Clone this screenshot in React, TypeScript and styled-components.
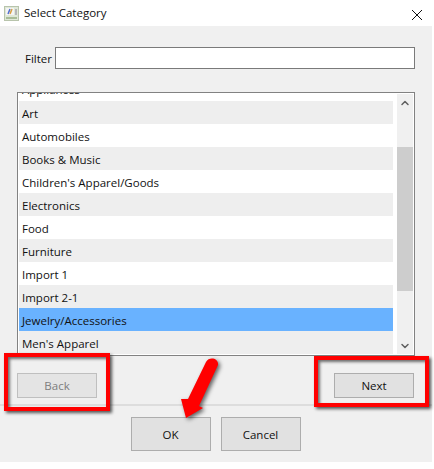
import React from "react";
import styled, { createGlobalStyle } from "styled-components";
import { ChevronUp, ChevronDown } from "lucide-react";

const GlobalStyle = createGlobalStyle`
  html, body {
    margin: 0;
    padding: 0;
    background: #fff;
  }
  body {
    font-family: "Open Sans", "Noto Sans", sans-serif;
    font-size: 11.5px;
    color: #111;
  }
`;

const Page = styled.div`
  position: relative;
  width: 434px;
  height: 469px;
  overflow: hidden;
`;

const Dialog = styled.div`
  width: 432px;
  height: 462px;
  background: #f0f0f0;
  display: flex;
  flex-direction: column;
`;

const TitleBar = styled.div`
  height: 26px;
  background: #fff;
  display: flex;
  align-items: center;
  padding: 0 10px 0 4px;
  gap: 5px;
`;

const Title = styled.div`
  flex: 1;
  line-height: 26px;
`;

const FilterRow = styled.div`
  display: flex;
  align-items: center;
  gap: 3px;
  margin: 21px 17px 0 25px;
  height: 22px;
`;

const FilterInput = styled.input`
  flex: 1;
  min-width: 0;
  height: 22px;
  box-sizing: border-box;
  border: 1px solid #7a7a7a;
  background: #fff;
  outline: none;
  padding: 0 3px;
`;

const ListBox = styled.div`
  margin: 23px 17px 0 17px;
  height: 264px;
  box-sizing: border-box;
  border: 1px solid #828282;
  background: #fff;
  display: flex;
`;

const Rows = styled.div`
  width: 374px;
  margin-left: 1px;
  height: 262px;
  overflow: hidden;
`;

const Row = styled.div<{ $tone: "white" | "gray" | "selected" }>`
  height: 23px;
  line-height: 25px;
  padding-left: 3px;
  overflow: hidden;
  white-space: nowrap;
  background: ${(p) =>
    p.$tone === "selected" ? "#69b2ff" : p.$tone === "gray" ? "#eeeeee" : "#fff"};
`;

const ClippedRow = styled.div`
  height: 8px;
  padding-left: 3px;
  overflow: hidden;
  white-space: nowrap;
  background: #fff;
`;

const ClippedLabel = styled.span`
  display: block;
  line-height: 14px;
  margin-top: -10px;
`;

const Scrollbar = styled.div`
  width: 16px;
  margin-left: 4px;
  background: #f0f0f0;
  display: flex;
  flex-direction: column;
  align-items: center;
  color: #606060;
  height: 260px;
  margin-top: 1px;
`;

const ScrollArrow = styled.div`
  height: 17px;
  display: flex;
  align-items: center;
  justify-content: center;
`;

const ScrollTrack = styled.div`
  flex: 1;
  width: 100%;
  padding-top: 36px;
  padding-bottom: 46px;
  box-sizing: border-box;
  display: flex;
`;

const ScrollThumb = styled.div`
  flex: 1;
  background: #cdcdcd;
`;

const NavRow = styled.div`
  display: flex;
  justify-content: space-between;
  margin: 17px 18px 0 17px;
`;

const Button = styled.button<{ $big?: boolean }>`
  width: 80px;
  height: ${(p) => (p.$big ? 34 : 25)}px;
  box-sizing: border-box;
  border: 1px solid #adadad;
  background: #e1e1e1;
  color: #111;
  font: inherit;
  padding: 0;
  &:disabled {
    border-color: #bfbfbf;
    background: #e4e4e4;
    color: #7d7d7d;
  }
`;

const Separator = styled.div`
  height: 2px;
  background: #dddddd;
  margin-top: 6px;
`;

const Footer = styled.div`
  display: flex;
  justify-content: center;
  gap: 10px;
  margin: 11px 0 0 -1px;
`;

const CloseBox = styled.div`
  width: 10px;
  height: 10px;
  color: #111;
`;

const Callout = styled.div<{ $left: number; $top: number; $w: number; $h: number }>`
  position: absolute;
  left: ${(p) => p.$left}px;
  top: ${(p) => p.$top}px;
  width: ${(p) => p.$w}px;
  height: ${(p) => p.$h}px;
  box-sizing: border-box;
  border: 4px solid #ff0000;
  box-shadow: 2px 2px 3px rgba(0, 0, 0, 0.65), inset 2px 2px 3px rgba(0, 0, 0, 0.55);
`;

const ArrowMark = styled.svg`
  position: absolute;
  left: 175px;
  top: 352px;
  filter: drop-shadow(2px 2px 2px rgba(0, 0, 0, 0.6));
`;

const tones = ["gray", "white"] as const;
const items = [
  "Art",
  "Automobiles",
  "Books & Music",
  "Children's Apparel/Goods",
  "Electronics",
  "Food",
  "Furniture",
  "Import 1",
  "Import 2-1",
  "Jewelry/Accessories",
  "Men's Apparel",
];

const AppIcon = () => (
  <svg width="15" height="15" viewBox="0 0 15 15">
    <rect x="0.5" y="0.5" width="14" height="14" fill="#dfe8d8" stroke="#b8c4ac" />
    <rect x="2" y="2" width="8" height="7" fill="#f4f4f4" />
    <path d="M4 8 L6 3" stroke="#4f6fd0" strokeWidth="1.5" />
    <path d="M6 8 L8 3" stroke="#d8a040" strokeWidth="1.5" />
    <rect x="11" y="3" width="2" height="6" fill="#b5b5b5" />
    <rect x="2" y="11" width="11" height="2" fill="#a9bd98" />
  </svg>
);

const App: React.FC = () => {
  return (
    <Page>
      <GlobalStyle />
      <Dialog>
        <TitleBar>
          <AppIcon />
          <Title>Select Category</Title>
          <CloseBox>
            <svg width="10" height="10" viewBox="0 0 10 10">
              <path d="M0 0 L10 10 M10 0 L0 10" stroke="currentColor" strokeWidth="1" />
            </svg>
          </CloseBox>
        </TitleBar>
        <FilterRow>
          <span>Filter</span>
          <FilterInput />
        </FilterRow>
        <ListBox>
          <Rows>
            <ClippedRow>
              <ClippedLabel>Appliances</ClippedLabel>
            </ClippedRow>
            {items.map((name, i) => (
              <Row key={name} $tone={name.startsWith("Jewelry") ? "selected" : tones[i % 2]}>
                {name}
              </Row>
            ))}
          </Rows>
          <Scrollbar>
            <ScrollArrow>
              <ChevronUp size={12} strokeWidth={3} />
            </ScrollArrow>
            <ScrollTrack>
              <ScrollThumb />
            </ScrollTrack>
            <ScrollArrow>
              <ChevronDown size={12} strokeWidth={3} />
            </ScrollArrow>
          </Scrollbar>
        </ListBox>
        <NavRow>
          <Button disabled>Back</Button>
          <Button>Next</Button>
        </NavRow>
        <Separator />
        <Footer>
          <Button $big>OK</Button>
          <Button $big>Cancel</Button>
        </Footer>
      </Dialog>
      <Callout $left={4} $top={353} $w={106} $h={58} />
      <Callout $left={314} $top={356} $w={115} $h={51} />
      <ArrowMark width="50" height="70" viewBox="0 0 50 70">
        <path
          d="M31 10 C34 4 44 6 43 13 L24 54 L28 56 L11 66 L6 47 L13 47 Z"
          fill="#ff0000"
        />
      </ArrowMark>
    </Page>
  );
};

export default App;
